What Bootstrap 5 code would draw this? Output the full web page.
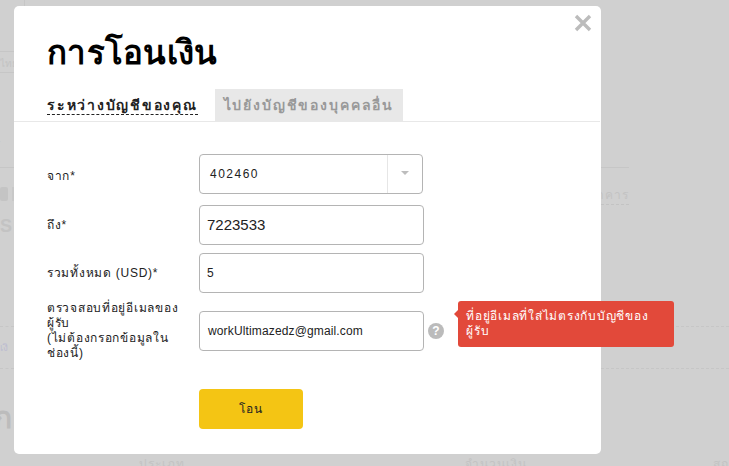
<!DOCTYPE html>
<html lang="th">
<head>
<meta charset="utf-8">
<link href="https://cdn.jsdelivr.net/npm/bootstrap@5.3.0/dist/css/bootstrap.min.css" rel="stylesheet">
<style>
html,body{height:466px;overflow:hidden}
body{background:#d0d0d0;font-family:"Liberation Sans","Noto Sans",sans-serif;color:#000;font-size:12px}
.backdrop-page{position:absolute;inset:0;color:#c3c3c3;overflow:hidden}
.backdrop-page span{position:absolute}
.bg-rule{height:1px;background:#c6c6c6}
.bg-dash{border-top:1px dashed #c6c6c6;height:0}
.sheet{position:absolute;left:14px;top:6px;width:587px;height:448px;background:#fff;border-radius:5px}
.sheet-close{position:absolute;left:560px;top:8px;width:18px;height:18px;padding:0;border:0;background:none;display:block}
.sheet-close svg{display:block}
.sheet-title{font-family:"Liberation Sans","Noto Sans",sans-serif;font-size:33px;font-weight:700;line-height:36px;margin:0;padding:29px 0 0 33px;letter-spacing:.3px;height:83px}
.tabline{height:33px;border-bottom:1px solid #e8e8e8;padding-left:33px;gap:17px;align-items:flex-end;margin-right:1px}
.tab-on{font-size:14px;font-weight:700;letter-spacing:1.75px;color:#222;border-bottom:1px dashed #222;line-height:17px;margin-bottom:6px}
.tab-off{font-size:14px;font-weight:700;letter-spacing:1.85px;color:#999;background:#e8e8e8;height:32px;line-height:32px;padding:0 9px}
.formbox{padding:32px 0 0 33px}
.frow{display:flex;align-items:center;margin-bottom:8px}
.flabel{width:152px;padding-right:16px;font-size:12px;letter-spacing:.72px;line-height:15px;color:#222;flex:none}
.flabel.lowset{padding-top:4px}
.finput{width:225px;height:40px;border:1px solid #b4b4b4;border-radius:4px;font-size:15px;padding:0 7px;color:#222;display:flex;align-items:center;flex:none}
.finput.sm{font-size:12px;letter-spacing:.14px;padding-left:8px}
.finput.one{font-size:12px}
.fselect{width:224px;padding:0 0 0 10px;font-size:12px;letter-spacing:1.5px;justify-content:space-between}
.fcaret{width:35px;height:38px;border-left:1px solid #e6e6e6;display:flex;align-items:center;justify-content:center;padding-bottom:2px}
.fcaret b{display:block;width:0;height:0;border:4px solid transparent;border-top-color:#bdbdbd;border-bottom:0}
.qmark{width:16px;height:16px;border-radius:50%;background:#bbb;color:#fff;font-weight:700;font-size:12px;line-height:16px;text-align:center;margin-left:4px;flex:none}
.err-tip{position:absolute;left:444px;top:295px;width:216px;height:46px;background:#e2493a;color:#fff;border-radius:3px;font-size:12px;letter-spacing:.76px;line-height:15px;padding:8px}
.err-tip::before{content:"";position:absolute;left:-4px;top:9px;border:4px solid transparent;border-right-color:#e2493a;border-left:0}
.send-btn{position:absolute;left:185px;top:383px;width:104px;height:40px;background:#f4c514;border:0;border-radius:4px;font-size:12px;letter-spacing:.8px;color:#222;padding:0}
</style>
</head>
<body>
<div class="backdrop-page">
  <span style="left:24px;top:0;width:1px;height:6px;background:#c6c6c6"></span>
  <span class="bg-rule" style="left:0;top:51px;width:14px"></span>
  <span class="bg-rule" style="left:0;top:72px;width:14px"></span>
  <span style="left:0;top:56px;font-size:10px">ไทย</span>
  <span style="left:-10px;top:138px;font-size:18px">ธ์</span>
  <span class="bg-rule" style="left:0;top:167px;width:14px"></span>
  <span style="left:0;top:187px;width:8px;height:14px;background:#c4c4c4;border-radius:2px"></span>
  <span style="left:12px;top:187px;width:2px;height:14px;background:#c8c8c8"></span>
  <span style="left:0;top:213px;font-size:18px;font-weight:700">S</span>
  <span class="bg-dash" style="left:0;top:326px;width:14px"></span>
  <span style="left:0;top:340px;font-size:10px;color:#bcbcd0">เงิ</span>
  <span class="bg-dash" style="left:0;top:368px;width:14px"></span>
  <span style="left:-6px;top:395px;font-size:30px;font-weight:700;color:#bcbcbc">ก</span>
  <span style="left:139px;top:455px;font-size:12px;letter-spacing:1px">ประเภท</span>
  <span style="left:465px;top:455px;font-size:12px;letter-spacing:1px">จำนวนเงิน</span>
  <span style="left:713px;top:455px;font-size:12px;letter-spacing:1px">สถ</span>
  <span class="bg-rule" style="left:601px;top:167px;width:28px"></span>
  <span style="left:601px;top:186px;font-size:12px;letter-spacing:1px;border-bottom:1px dashed #c3c3c3;width:28px;overflow:hidden;direction:rtl;white-space:nowrap">ธนาคาร</span>
  <span class="bg-dash" style="left:601px;top:326px;width:128px"></span>
  <span class="bg-dash" style="left:601px;top:368px;width:128px"></span>
</div>
<div class="sheet">
  <button class="sheet-close" type="button" aria-label="ปิด"><svg width="18" height="18" viewBox="0 0 18 18"><path d="M2 2 16 16M16 2 2 16" stroke="#bcbcbc" stroke-width="3.4" fill="none"/></svg></button>
  <h1 class="sheet-title">การโอนเงิน</h1>
  <div class="d-flex tabline">
    <span class="tab-on">ระหว่างบัญชีของคุณ</span>
    <span class="tab-off">ไปยังบัญชีของบุคคลอื่น</span>
  </div>
  <div class="formbox">
    <div class="frow" style="margin-bottom:11px"><div class="flabel lowset">จาก*</div><div class="finput fselect"><span>402460</span><span class="fcaret"><b></b></span></div></div>
    <div class="frow"><div class="flabel">ถึง*</div><div class="finput">7223533</div></div>
    <div class="frow"><div class="flabel">รวมทั้งหมด (USD)*</div><div class="finput one">5</div></div>
    <div class="frow"><div class="flabel">ตรวจสอบที่อยู่อีเมลของผู้รับ<br>(ไม่ต้องกรอกข้อมูลในช่องนี้)</div><div class="finput sm">workUltimazedz@gmail.com</div><div class="qmark">?</div></div>
  </div>
  <div class="err-tip">ที่อยู่อีเมลที่ใส่ไม่ตรงกับบัญชีของผู้รับ</div>
  <button class="send-btn" type="button">โอน</button>
</div>
<script src="https://cdn.jsdelivr.net/npm/bootstrap@5.3.0/dist/js/bootstrap.bundle.min.js"></script>
</body>
</html>
